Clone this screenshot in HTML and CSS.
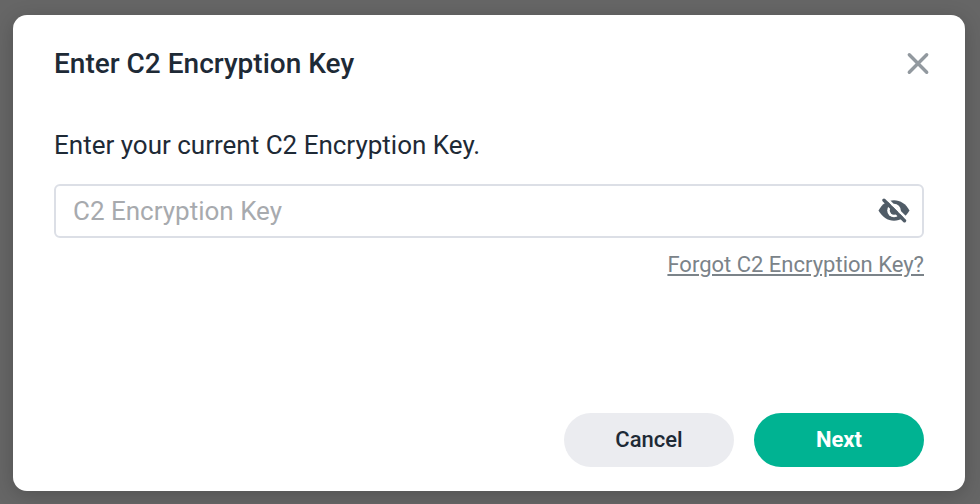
FILE: index.html
```html
<!DOCTYPE html>
<html lang="en">
<head>
<meta charset="utf-8">
<meta name="viewport" content="width=device-width, initial-scale=1">
<title>Enter C2 Encryption Key</title>
<link rel="stylesheet" href="styles.css">
</head>
<body>
<form class="dialog" role="dialog" aria-labelledby="dialog-title">
  <header class="dialog-header">
    <h1 class="dialog-title" id="dialog-title">Enter C2 Encryption Key</h1>
    <button class="icon-button" type="button" aria-label="Close">
      <svg width="24" height="24" viewBox="0 0 24 24" fill="none" stroke="#92999f" stroke-width="3.4" stroke-linecap="round"><path d="M3.300 2.800 20.700 20.200M20.700 2.800 3.300 20.200"/></svg>
    </button>
  </header>
  <div class="dialog-body">
    <label class="field-label" for="key">Enter your current C2 Encryption Key.</label>
    <div class="field">
      <input class="field-input" id="key" type="password" placeholder="C2 Encryption Key">
      <button class="icon-button" type="button" aria-label="Show key">
        <svg width="32" height="26" viewBox="0 0 32 26">
          <path fill="#505c67" d="M.5 12.500C4.200 6 9.500 2.300 16 2.300s11.800 3.700 15.500 10.200C27.800 19 22.500 22.700 16 22.700S4.200 19 .5 12.500z"/>
          <circle cx="16" cy="12.500" r="6.800" fill="#fff"/>
          <circle cx="16" cy="12.500" r="4.200" fill="#505c67"/>
          <path d="M8 0 29.500 21.500" stroke="#fff" stroke-width="2.600"/>
          <path d="M6 2.300 26.500 22.800" stroke="#505c67" stroke-width="3.400" stroke-linecap="round"/>
        </svg>
      </button>
    </div>
    <a class="forgot-link" href="#forgot">Forgot C2 Encryption Key?</a>
  </div>
  <footer class="dialog-footer">
    <button class="button" type="button">Cancel</button>
    <button class="button button-primary" type="submit">Next</button>
  </footer>
</form>
</body>
</html>
```
FILE: styles.css
```css
* {
  box-sizing: border-box;
}

body {
  display: flex;
  min-height: 100vh;
  margin: 0;
  padding: 15px 15px 13px 13px;
  background: #666;
  color: #1e2a36;
  font-family: Roboto, sans-serif;
}

.dialog {
  display: flex;
  flex: 1;
  flex-direction: column;
  padding: 32px 41px 24px;
  border-radius: 14px;
  background: #fff;
  box-shadow: 0 4px 20px rgba(0, 0, 0, 0.2);
}

.dialog-header {
  display: flex;
  align-items: center;
  justify-content: space-between;
  margin-right: -6px;
}

.dialog-title {
  margin: 0;
  font-size: 28px;
  font-weight: 500;
  line-height: 33px;
}

.icon-button {
  display: flex;
  padding: 0;
  border: 0;
  background: none;
  cursor: pointer;
}

.dialog-body {
  display: flex;
  flex: 1;
  flex-direction: column;
  margin-top: 47px;
}

.field-label {
  font-size: 26px;
  line-height: 36px;
}

.field {
  display: flex;
  align-items: center;
  height: 54px;
  margin-top: 21px;
  padding: 0 12px 0 17px;
  border: 2px solid #dcdfe6;
  border-radius: 6px;
}

.field-input {
  flex: 1;
  min-width: 0;
  padding: 0;
  border: 0;
  outline: 0;
  background: none;
  color: inherit;
  font: 26px/36px Roboto, sans-serif;
}

.field-input::placeholder {
  color: #a7aaae;
}

.forgot-link {
  align-self: flex-end;
  margin-top: 12px;
  color: #7b8389;
  font-size: 22px;
  line-height: 30px;
  text-underline-offset: 2px;
}

.dialog-footer {
  display: flex;
  justify-content: flex-end;
  gap: 20px;
}

.button {
  width: 170px;
  height: 54px;
  padding: 0;
  border: 0;
  border-radius: 27px;
  background: #ebecf0;
  color: #1e2a36;
  font: 500 22px/30px Roboto, sans-serif;
  cursor: pointer;
}

.button-primary {
  background: #00b392;
  color: #fff;
  font-weight: 700;
}
```
